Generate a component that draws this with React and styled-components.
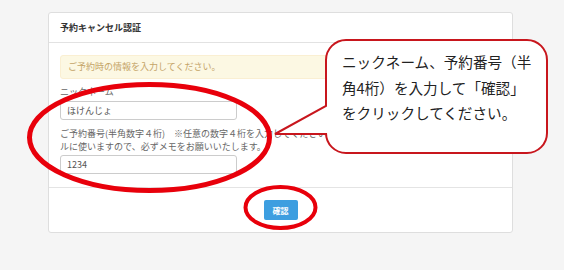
import styled, { createGlobalStyle } from 'styled-components';

const GlobalStyle = createGlobalStyle`
  html, body {
    margin: 0;
    padding: 0;
    background: #f5f5f5;
  }
  * {
    box-sizing: border-box;
  }
`;

const Stage = styled.div`
  position: relative;
  width: 564px;
  height: 270px;
  overflow: hidden;
  padding: 12px 0 0 48px;
  font-family: "Noto Sans CJK JP", "Liberation Sans", sans-serif;
`;

const Card = styled.section`
  width: 465px;
  background: #fff;
  border: 1px solid #dedede;
  border-radius: 3px;
`;

const CardHeader = styled.header`
  height: 30px;
  border-bottom: 1px solid #e2e2e2;
  padding-left: 11px;
  font-size: 9px;
  line-height: 29px;
  font-weight: 700;
  color: #333;
`;

const CardBody = styled.div`
  padding: 12px 11px 13px;
  display: flex;
  flex-direction: column;
  align-items: flex-start;
`;

const Alert = styled.div`
  width: 100%;
  height: 24px;
  padding-left: 7px;
  background: #fcf8e3;
  border: 1px solid #faefd2;
  border-radius: 3px;
  font-size: 9px;
  line-height: 22px;
  color: #c4a468;
`;

const Label = styled.label`
  margin-top: ${(p) => p.$gap}px;
  margin-bottom: ${(p) => p.$after}px;
  font-size: 9px;
  line-height: 13px;
  color: #666;
  white-space: nowrap;
`;

const Input = styled.input`
  width: 177px;
  height: 19px;
  padding: 0 6px;
  border: 1px solid #ccc;
  border-radius: 3px;
  font-family: inherit;
  font-size: 9px;
  color: #555;
  background: #fff;
  outline: none;
`;

const CardFooter = styled.footer`
  border-top: 1px solid #e4e4e4;
  padding: 12px 0;
  display: flex;
  justify-content: center;
`;

const Button = styled.button`
  width: 34px;
  height: 20px;
  padding: 0;
  border: none;
  border-radius: 2px;
  background: #3d9ee0;
  color: #fff;
  font-family: inherit;
  font-size: 8px;
  font-weight: 700;
`;

const Overlay = styled.svg`
  position: absolute;
  left: 0;
  top: 0;
  pointer-events: none;
`;

const BubbleText = styled.p`
  position: absolute;
  left: 342px;
  top: 49px;
  margin: 0;
  font-size: 14.6px;
  line-height: 25.5px;
  color: #222;
  white-space: nowrap;
`;

const bubblePath = [
  'M346 40',
  'H527',
  'A20 20 0 0 1 547 60',
  'V133',
  'A20 20 0 0 1 527 153',
  'H346',
  'A20 20 0 0 1 326 133',
  'V134',
  'L275 134',
  'L326 106',
  'V60',
  'A20 20 0 0 1 346 40',
  'Z',
].join(' ');

const App = () => {
  return (
    <Stage>
      <GlobalStyle />
      <Card>
        <CardHeader>予約キャンセル認証</CardHeader>
        <CardBody>
          <Alert>ご予約時の情報を入力してください。</Alert>
          <Label $gap={6} $after={3}>ニックネーム</Label>
          <Input defaultValue="ほけんじょ" />
          <Label $gap={7} $after={2}>
            ご予約番号(半角数字４桁)　※任意の数字４桁を入力してください。キャンセ
            <br />
            ルに使いますので、必ずメモをお願いいたします。
          </Label>
          <Input defaultValue="1234" />
        </CardBody>
        <CardFooter>
          <Button>確認</Button>
        </CardFooter>
      </Card>

      <Overlay width="564" height="270" viewBox="0 0 564 270">
        <ellipse cx="149.5" cy="137.5" rx="120" ry="53" fill="none" stroke="#e8000b" strokeWidth="5" />
        <ellipse cx="280.5" cy="207.5" rx="35" ry="20.5" fill="none" stroke="#e8000b" strokeWidth="4" />
        <path d={bubblePath} fill="#fff" stroke="#c8161d" strokeWidth="2" strokeLinejoin="miter" />
      </Overlay>
      <BubbleText>
        ニックネーム、予約番号（半
        <br />
        角4桁）を入力して「確認」
        <br />
        をクリックしてください。
      </BubbleText>
    </Stage>
  );
};

export default App;
